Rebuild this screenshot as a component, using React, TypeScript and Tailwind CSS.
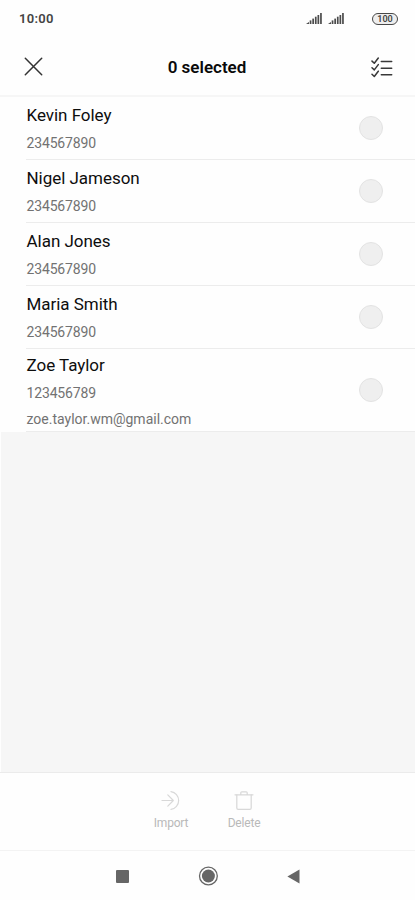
type Contact = { name: string; phone: string; email?: string };

const contacts: Contact[] = [
  { name: "Kevin Foley", phone: "234567890" },
  { name: "Nigel Jameson", phone: "234567890" },
  { name: "Alan Jones", phone: "234567890" },
  { name: "Maria Smith", phone: "234567890" },
  { name: "Zoe Taylor", phone: "123456789", email: "zoe.taylor.wm@gmail.com" },
];

function Signal() {
  return (
    <svg width="16" height="12" viewBox="0 0 16 12" fill="#4c4c4c">
      <path d="M0 11 3 9V11Z" />
      <rect x="3.7" y="7.4" width="1.7" height="3.6" />
      <rect x="6.3" y="5.6" width="1.7" height="5.4" />
      <rect x="8.9" y="3.7" width="1.7" height="7.3" />
      <rect x="11.5" y="2" width="1.7" height="9" />
      <rect x="14.1" y="0" width="1.7" height="11" />
    </svg>
  );
}

function StatusBar() {
  return (
    <div className="flex h-[38px] shrink-0 items-center pl-[19px] pr-[17px] text-[#444]">
      <span className="flex-1 text-[13px] font-semibold tracking-[0.3px]">10:00</span>
      <div className="flex items-center gap-[6px]">
        <Signal />
        <Signal />
      </div>
      <div className="ml-[28px] flex h-[12px] w-[26px] items-center justify-center rounded-full border border-[#484848] bg-[#eeeeee] text-[9px] font-semibold leading-none">
        100
      </div>
    </div>
  );
}

function Header() {
  return (
    <header className="flex h-[59px] shrink-0 items-center justify-between border-b-2 border-[#f6f6f6] pl-[24px] pr-[22px]">
      <svg width="19" height="19" viewBox="0 0 19 19" fill="none" stroke="#333" strokeWidth="1.5" strokeLinecap="round">
        <path d="M1.3 1.3 17.7 17.7M17.7 1.3 1.3 17.7" />
      </svg>
      <h1 className="pt-[2px] text-[17px] font-semibold text-[#0a0a0a]">0 selected</h1>
      <svg className="mt-[2px]" width="22" height="21" viewBox="0 0 22 21" fill="none" stroke="#383838" strokeWidth="1.5" strokeLinecap="round" strokeLinejoin="round">
        <path d="M1 4.1 3.3 6.3 7.3 1M10.3 4.4H20.7" />
        <path d="M1 10.7 3.3 12.9 7.3 7.6M10.3 11.2H20.7" />
        <path d="M1 17.3 3.3 19.5 7.3 14.2M10.3 17.7H20.7" />
      </svg>
    </header>
  );
}

function Row({ contact }: { contact: Contact }) {
  const tall = Boolean(contact.email);
  return (
    <li className={`ml-[26px] flex items-center justify-between border-b border-[#ececec] pr-[32px] ${tall ? "h-[83px]" : "h-[63px]"}`}>
      <div className={`self-start pl-[0.5px] ${tall ? "pt-[2px]" : "pt-[4px]"}`}>
        <div className="text-[17px] leading-[28px] tracking-[-0.03px] text-[#0d0d0d]">{contact.name}</div>
        <div className="text-[14px] leading-[28px] tracking-[-0.15px] text-[#727272]">{contact.phone}</div>
        {contact.email && <div className="text-[14px] leading-[24px] text-[#727272]">{contact.email}</div>}
      </div>
      <span className="size-[24px] rounded-full border border-[#e3e3e3] bg-[#efefef]" />
    </li>
  );
}

function Footer() {
  return (
    <footer className="flex h-[78px] shrink-0 justify-center gap-[33px] border-t border-[#ebebeb] pt-[18px] text-[12px] tracking-[-0.2px] text-[#b9b9b9]">
      <button className="flex w-[40px] flex-col items-center">
        <svg width="20" height="20" viewBox="0 0 20 20" fill="none" stroke="#d8d8d8" strokeWidth="1.2" strokeLinecap="round" strokeLinejoin="round">
          <path d="M1 9.5H12.3M6.8 3.9 12.3 9.5 6.8 15.1" />
          <path d="M10 0.6A9 9 0 0 1 10 18.4" />
        </svg>
        <span className="mt-[4px] leading-[16px]">Import</span>
      </button>
      <button className="flex w-[40px] flex-col items-center">
        <svg width="20" height="20" viewBox="0 0 20 20" fill="none" stroke="#d8d8d8" strokeWidth="1.2" strokeLinecap="round" strokeLinejoin="round">
          <path d="M1 3.8H19M6.8 3.6V1.8Q6.8 0.8 7.8 0.8H12.2Q13.2 0.8 13.2 1.8V3.6" />
          <path d="M2.8 3.8V17Q2.8 18.3 4.1 18.3H15.9Q17.2 18.3 17.2 17V3.8" />
        </svg>
        <span className="mt-[4px] leading-[16px]">Delete</span>
      </button>
    </footer>
  );
}

function NavBar() {
  return (
    <nav className="flex h-[50px] shrink-0 items-center justify-between border-t border-[#f3f3f3] pl-[116px] pr-[115px] pt-px">
      <span className="size-[13px] rounded-[1px] bg-[#666]" />
      <svg width="20" height="20" viewBox="0 0 20 20">
        <circle cx="10.4" cy="10" r="8.9" fill="none" stroke="#666" strokeWidth="1.3" />
        <circle cx="10.4" cy="10" r="6.5" fill="#666" />
      </svg>
      <svg width="13" height="15" viewBox="0 0 13 15">
        <path d="M0.4 7.5 12.5 0.4V14.6Z" fill="#666" />
      </svg>
    </nav>
  );
}

export default function App() {
  return (
    <div className="flex h-[900px] w-[415px] flex-col bg-[#fefefe] font-['Roboto',sans-serif]">
      <StatusBar />
      <Header />
      <ul className="shrink-0">
        {contacts.map((contact) => (
          <Row key={contact.name} contact={contact} />
        ))}
      </ul>
      <div className="ml-px flex-1 bg-[#f6f6f6]" />
      <Footer />
      <NavBar />
    </div>
  );
}
